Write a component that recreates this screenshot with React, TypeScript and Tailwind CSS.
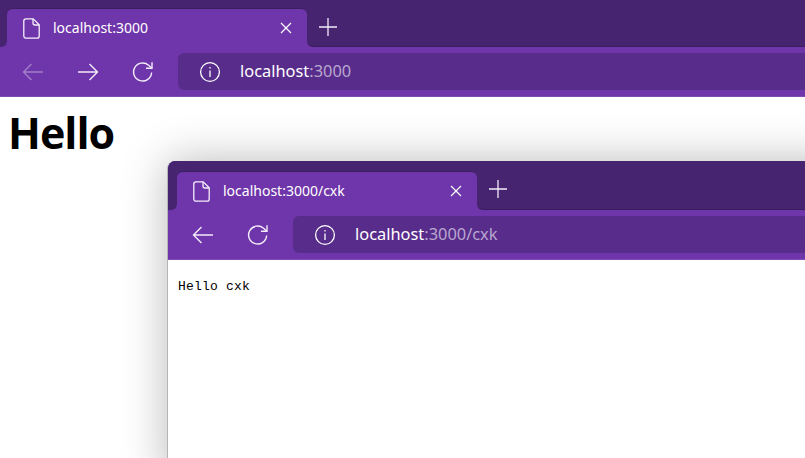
import React from 'react';

const BackIcon = ({ className = '' }: { className?: string }) => (
  <svg width="22" height="18" viewBox="0 0 22 18" fill="none" stroke="currentColor" strokeWidth="1.4" className={className}>
    <path d="M21 9H1.5M9.5 1L1.5 9l8 8" />
  </svg>
);

const ForwardIcon = ({ className = '' }: { className?: string }) => (
  <svg width="22" height="18" viewBox="0 0 22 18" fill="none" stroke="currentColor" strokeWidth="1.4" className={className}>
    <path d="M1 9h19.5M12.5 1l8 8-8 8" />
  </svg>
);

const ReloadIcon = () => (
  <svg width="22" height="22" viewBox="0 0 22 22" fill="none" stroke="currentColor" strokeWidth="1.4" className="text-[#f3ecf9]">
    <path d="M19.6 11.5a9 9 0 1 1-3-7.2l3 2.7" />
    <path d="M20 1.2V7.2h-6" />
  </svg>
);

const InfoIcon = () => (
  <svg width="22" height="22" viewBox="0 0 22 22" fill="none" stroke="currentColor" strokeWidth="1.3" className="text-white">
    <circle cx="11" cy="11" r="9.4" />
    <path d="M11 9.5v6.5M11 6v1.6" />
  </svg>
);

const FileIcon = () => (
  <svg width="17" height="21" viewBox="0 0 17 21" fill="none" stroke="currentColor" strokeWidth="1.3" className="text-[#f6f0fb]">
    <path d="M3 .8h7.2l6 6V18a2.2 2.2 0 0 1-2.2 2.2H3A2.2 2.2 0 0 1 .8 18V3A2.2 2.2 0 0 1 3 .8z" />
    <path d="M10 1v4a2 2 0 0 0 2 2h4" />
  </svg>
);

const CloseIcon = () => (
  <svg width="12" height="12" viewBox="0 0 12 12" fill="none" stroke="currentColor" strokeWidth="1.2" className="text-white">
    <path d="M1 1l10 10M11 1L1 11" />
  </svg>
);

const PlusIcon = () => (
  <svg width="18" height="18" viewBox="0 0 18 18" fill="none" stroke="currentColor" strokeWidth="1.3" className="text-[#f3ecf9]">
    <path d="M9 0v18M0 9h18" />
  </svg>
);

interface ChromeProps {
  host: string;
  rest: string;
  hasForward?: boolean;
}

const BrowserChrome = ({ host, rest, hasForward = false }: ChromeProps) => (
  <div className="bg-[#6f35aa]">
    {/* tab strip */}
    <div className={`flex items-stretch ${hasForward ? 'h-[47px]' : 'h-[49px]'}`}>
      <div className={`rounded-br-md bg-[#46246f] ${hasForward ? 'w-[7px]' : 'w-[9px]'}`} />
      <div className={`w-[300px] flex flex-col ${hasForward ? 'pt-[8px]' : 'pt-[10px]'} bg-[#46246f]`}>
        <div className="flex-1 flex items-center rounded-t-md bg-[#6f35aa] border-t border-[#3a1e5e] pl-[16px] pr-[15px]">
          <FileIcon />
          <span className="ml-[13px] text-[14px] -mt-[1px] text-white whitespace-nowrap flex-1">{host}{rest}</span>
          <CloseIcon />
        </div>
      </div>
      <div className="flex-1 flex items-center rounded-bl-md bg-[#46246f] pl-[12px] pt-[8px] border-b border-[#3a1e5e]">
        <PlusIcon />
      </div>
    </div>
    {/* toolbar */}
    <div className={`flex items-center h-[50px] border-b border-[#7f4bb5] ${hasForward ? 'pl-[22px]' : 'pl-[24px]'}`}>
      {hasForward ? (
        <>
          <BackIcon className="text-[#a47fca]" />
          <ForwardIcon className="ml-[33px] text-[#f3ecf9]" />
          <div className="ml-[33px]"><ReloadIcon /></div>
        </>
      ) : (
        <>
          <BackIcon className="text-[#f3ecf9]" />
          <div className="ml-[33px]"><ReloadIcon /></div>
        </>
      )}
      <div className="flex-1 flex items-center h-[37px] rounded-l-md bg-[#582c8b] pl-[21px] ml-[24px]">
        <InfoIcon />
        <span className="ml-[19px] -mt-[1px] text-[16.4px] whitespace-nowrap text-white">
          {host}<span className="text-[#b9a6cf]">{rest}</span>
        </span>
      </div>
    </div>
  </div>
);

export default function App() {
  return (
    <div className="relative w-[805px] h-[458px] overflow-hidden bg-white font-['Noto_Sans',sans-serif]">
      <BrowserChrome host="localhost" rest=":3000" hasForward />
      <h1 className="pl-[8px] pt-[8px] text-[43px] leading-[56px] tracking-[-1px] font-bold text-black font-['Open_Sans',sans-serif]">Hello</h1>

      {/* second window sitting over the first one */}
      <div className="absolute left-[167px] top-[161px] w-[700px] h-[320px] bg-white rounded-tl-lg overflow-hidden border-l border-[#b5b5b5] shadow-[0_0_45px_rgba(0,0,0,0.28)]">
        <BrowserChrome host="localhost" rest=":3000/cxk" />
        <p className="pl-[10px] pt-[18px] text-[13px] leading-[18px] tracking-[0.2px] text-black font-['Liberation_Mono',monospace]">Hello cxk</p>
      </div>
    </div>
  );
}
